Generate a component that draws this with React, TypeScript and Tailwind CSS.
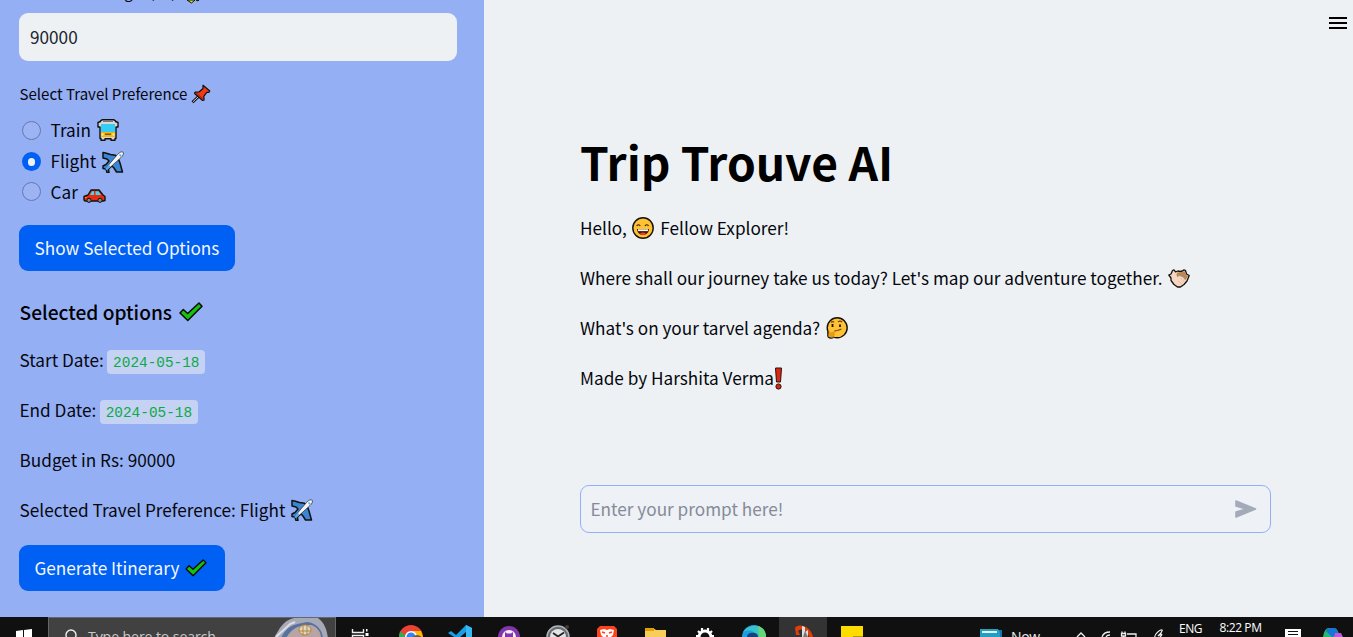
import React from "react";

type P = { children?: React.ReactNode; className?: string };

const Line = ({ children, className = "" }: P) => (
  <div className={"flex items-center whitespace-pre text-[17.2px] leading-[30px] " + className}>{children}</div>
);

const Check = ({ className = "h-5 w-6" }: P) => (
  <svg viewBox="0 0 24 20" className={"shrink-0 " + className}>
    <path d="M1 11 4.300 7.500l4.400 4L20 1l3 3.200L8.800 18.500z" fill="#13c30f" stroke="#0a0a0a" strokeWidth="1.500" strokeLinejoin="round" />
  </svg>
);

const Plane = ({ className = "" }: P) => (
  <svg viewBox="0 0 22 22" className={"h-[22px] w-[22px] shrink-0 " + className}>
    <path d="M1 1.500 3.500 2l5 1.500 5 .8 3 3.700 1.500 4 2.500 9h-6L12 17l-2-2-3.500 3 .5 3.500H5L4 18l-3-.5v-2.500l3-1.500L7 10 5 8 1 7z" fill="#3a86d4" stroke="#101010" strokeWidth="1.500" strokeLinejoin="round" />
    <path d="M3.600 17.500 15.500 3.500C17.500 1 20 .5 21 1s.5 3.500-2 5.500L5.500 18.800z" fill="#f3f3f3" stroke="#101010" strokeWidth=".6" strokeLinejoin="round" />
    <path d="m17.500 3.500 1.700 1.700" stroke="#37b8ee" strokeWidth="1.600" />
    <path d="m4 18.500 3.500-4" stroke="#4ba8ee" strokeWidth="2" />
  </svg>
);

const Bus = () => (
  <svg viewBox="0 0 22 22" className="h-[22px] w-[22px] shrink-0">
    <path d="M1 3.500 3.500 2.500V1.800L5 .8h12l1.500 1v.7L21 3.500V8h-2v11.500h-1v1.700h-4v-1.500H8v1.500H4v-1.700H3V8H1z" fill="#d8d8d8" stroke="#111" strokeWidth="1.400" strokeLinejoin="round" />
    <path d="M4 5h14v8H4z" fill="#33cdf5" />
    <path d="M4 13h14v5H4z" fill="#f6b80c" />
    <path d="M8 14.500h6v1.500H8z" fill="#775b20" />
    <path d="M4.500 14.500h2v2h-2zM15.500 14.500h2v2h-2z" fill="#fff1ac" />
    <path d="M6 2.500h10" stroke="#777" />
  </svg>
);

const Car = () => (
  <svg viewBox="0 0 23 14" className="h-3.5 w-[23px] shrink-0">
    <path d="M1 7.500 5 6l3-5h8l4 5 2 1.500v4l-2 .5H2l-1-1z" fill="#e72c12" stroke="#111" strokeWidth="1.400" strokeLinejoin="round" />
    <path d="M7 6 9 2.200h2V6zM12.500 6V2.200h3L18 6z" fill="#45d3ee" />
    <circle cx="6" cy="11.300" r="2.100" fill="#888" stroke="#111" /><circle cx="17" cy="11.300" r="2.100" fill="#888" stroke="#111" />
    <path d="M2 8.500h1.500" stroke="#ffb000" />
  </svg>
);

const Pin = () => (
  <svg viewBox="0 0 20 20" className="h-5 w-5 shrink-0">
    <path d="m8 12-6.500 6.300" stroke="#111" strokeWidth="2.800" />
    <path d="m8 12-6 5.700" stroke="#ddd" strokeWidth="1" />
    <path d="M12 1.200 18.800 7l-1 1.500-2-.2-3 4 .3 3.700-1.500.5-8-7L4 8.200l4-.2 4-3.500z" fill="#ef3b13" stroke="#111" strokeWidth="1.200" strokeLinejoin="round" />
    <path d="m5 8.700 7 6" stroke="#a91b0a" />
  </svg>
);

const Smile = () => (
  <svg viewBox="0 0 22 22" className="h-[22px] w-[22px] shrink-0">
    <circle cx="11" cy="11" r="10.200" fill="#ffc234" stroke="#15110a" strokeWidth="1.400" />
    <path d="M4.700 9c.5-1.700 3-1.700 3.500 0M13 9c.5-1.700 3-1.700 3.500 0" fill="none" stroke="#291b0c" strokeWidth="1.100" />
    <path d="M5 12h12c-.2 3.500-2.500 6-6 6s-5.800-2.500-6-6z" fill="#46170d" />
    <path d="M6 12.300h10v1.800H6z" fill="#fff" /><path d="M8 16.500c2-1.500 4-1.500 6 0-1.500 2-4.500 2-6 0z" fill="#ef4126" />
  </svg>
);

const Think = () => (
  <svg viewBox="0 0 22 22" className="h-[22px] w-[22px] shrink-0">
    <circle cx="11.200" cy="10.800" r="10" fill="#ffc234" stroke="#15110a" strokeWidth="1.400" />
    <path d="M2.500 14.500c1-1 1.500-.5 2 1l4-1.300c1.500-.2 1 1.300 0 1.500 1 2-.5 4.800-4 4.800-2 0-3-2.500-2-6z" fill="#e89b14" />
    <path d="M1.800 15v4c0 2 3 2.500 5.500 1.700" stroke="#111" strokeWidth="1.200" fill="none" />
    <path d="M6.500 7v3M14 7.500v2.500" stroke="#1c140b" strokeWidth="1.800" />
    <path d="M5 5.500c1-1 2-1 3.200-.3M12 4.800c1.300-.8 3-.7 4 .2M8.500 13.800l3-.3L15.500 12" fill="none" stroke="#77420c" strokeWidth="1.200" />
  </svg>
);

const Hands = () => (
  <svg viewBox="0 0 22 19" className="h-[19px] w-[22px] shrink-0">
    <path d="M.8 6 3 5l1.500-3.500L6 .8l1.500 2L10 2l2 .5 2.500-.5L16 .8l1.500.7L18.500 5 21.200 6.500 19 12l-3 3.500-3.500 2.500H9.500L6 15.500l-3-4L3 9z" fill="#f6d6c0" stroke="#17110d" strokeWidth="1.300" strokeLinejoin="round" />
    <path d="m9 3.500 3-.3 2.500-.5L16 2l1 .7 1 3 2 1.500-2.700 4-2.300-3-4-1.500-1.500 1.500L8.500 6z" fill="#b88858" />
    <path d="m10 12 4 3M13 9l3 4" stroke="#e6bda2" />
  </svg>
);

const Radio = ({ on = false }: { on?: boolean }) => on ? (
  <span className="flex h-[19px] w-[19px] items-center justify-center rounded-full bg-[#0060f3]"><i className="h-2 w-[7px] rounded-full bg-[#edf1f5]" /></span>
) : <span className="h-[19px] w-[19px] rounded-full border border-[#6678aa] bg-[#9db4f4]" />;

const Code = ({ children }: P) => (
  <span className="mt-[3px] ml-[3.5px] flex h-6 w-[98px] items-center justify-center rounded bg-[#c5d2f4] pt-[2px] font-[Liberation_Mono,monospace] text-[14.4px] text-[#0baa45]">{children}</span>
);

const Sidebar = () => (
  <aside className="flex h-full w-[484px] shrink-0 flex-col overflow-hidden bg-[#95aff5] pl-[19px]">
    <div className="relative h-[13px] w-[190px] shrink-0">
      <div className="absolute top-[-18px] left-px flex items-center text-[15.05px] leading-5 whitespace-pre">Enter Your Budget (Rs)</div>
      <svg viewBox="0 0 13 4" className="absolute top-0 left-[168px] h-1 w-[13px]"><path d="M0 0h8L4.500 3zM9 0h3l-1 1z" fill="#d9db32" stroke="#111" /></svg>
    </div>
    <div className="flex h-12 w-[438px] shrink-0 items-center rounded-[9px] bg-[#edf1f4] pb-px pl-[11px] text-[17.2px] text-[#20242d]">90000</div>
    <div className="mt-[18px] flex h-[30px] shrink-0 items-center gap-1 pl-[0.5px] text-[15.05px]"><span>Select Travel Preference</span><Pin /></div>
    <div className="mt-[6px] flex h-[93px] shrink-0 flex-col pl-[3px] text-[17.2px]">
      <div className="flex h-[31px] shrink-0 items-center"><Radio /><span className="mr-[6px] ml-[9.5px] pb-[2px]">Train</span><span className="pb-[2px]"><Bus /></span></div>
      <div className="flex h-[31px] shrink-0 items-center"><Radio on /><span className="mr-[6px] ml-[9.5px] pb-[2px]">Flight</span><Plane /></div>
      <div className="flex h-[29px] shrink-0 items-center"><Radio /><span className="mr-[5px] ml-[9.5px]">Car</span><span className="pt-[9px]"><Car /></span></div>
    </div>
    <button className="mt-[17px] flex h-[46px] w-[216px] shrink-0 items-center rounded-[9px] bg-[#0060f3] pb-px pl-[15.5px] text-[17.2px] whitespace-nowrap text-[#f3f7ff]">Show Selected Options</button>
    <div className="mt-[25px] flex h-8 shrink-0 items-center gap-[7px] pl-[0.5px] text-[19.150px] font-medium text-black"><span>Selected options</span><Check /></div>
    <Line className="mt-[17px] h-[30px] shrink-0 pl-[0.5px]">Start Date:<Code>2024-05-18</Code></Line>
    <Line className="mt-5 h-[30px] shrink-0 pl-[0.5px]">End Date:<Code>2024-05-18</Code></Line>
    <Line className="mt-5 h-[30px] shrink-0 pl-[0.5px]">Budget in Rs: 90000</Line>
    <Line className="mt-5 h-[30px] shrink-0 pl-[0.5px]">Selected Travel Preference: Flight<Plane className="ml-[6px]" /></Line>
    <button className="mt-5 flex h-[46px] w-[206px] shrink-0 items-center gap-[6px] rounded-[9px] bg-[#0060f3] pl-[15.5px] text-[17.2px] whitespace-nowrap text-[#f3f7ff]"><span className="pb-px">Generate Itinerary</span><Check className="h-[18px] w-[22px]" /></button>
  </aside>
);

const Main = () => (
  <main className="flex min-w-0 flex-1 flex-col bg-[#edf1f4]">
    <header className="flex h-[46px] shrink-0 justify-end pt-[17px] pr-[6px]">
      <svg viewBox="0 0 18 12" className="h-3 w-[18px]"><path d="M0 1h18M0 6h18M0 11h18" stroke="#000" strokeWidth="2" /></svg>
    </header>
    <div className="flex flex-col pl-24">
      <h1 className="mt-[85px] h-[60px] text-[46.1px] leading-[60px] font-bold whitespace-nowrap text-black">Trip Trouve AI</h1>
      <Line className="mt-[22px] h-[30px]">Hello,<span className="mr-[6px] ml-[5.5px]"><Smile /></span>Fellow Explorer!</Line>
      <Line className="mt-5 h-[30px]"><span>Where shall our journey take us today? Let's map our adventure together.</span><span className="ml-[5px]"><Hands /></span></Line>
      <Line className="mt-5 h-[30px]"><span>What's on your tarvel agenda?</span><span className="ml-[5.5px]"><Think /></span></Line>
      <Line className="mt-5 h-[30px]"><span>Made by Harshita Verma</span><svg viewBox="0 0 9 23" className="h-[23px] w-[9px]"><path d="M1.500 1h6L6.500 15h-4z" fill="#d82915" stroke="#301008" /><circle cx="4.500" cy="19.500" r="2.600" fill="#d82915" stroke="#301008" /></svg></Line>
      <div className="mt-[92px] flex h-12 w-[691px] items-center justify-between rounded-[9px] border border-[#95aff5] bg-[#eef1f5] pr-[13px] pl-[9.5px] text-[17.2px] text-[#858b98]">
        <span className="pb-px">Enter your prompt here!</span>
        <svg viewBox="0 0 22 18" className="h-[18px] w-[22px]"><path d="M1 1 20.500 9 1 17v-5L11 9 1 6z" fill="#a4aab9" stroke="#a4aab9" strokeWidth="1.600" strokeLinejoin="round" /></svg>
      </div>
    </div>
  </main>
);

const Taskbar = () => (
  <footer className="flex h-5 shrink-0 overflow-hidden bg-[#101010]">
    <div className="flex h-5 w-12 shrink-0 justify-end pr-4"><svg viewBox="0 0 16 16" className="mt-3 h-4 w-4"><path d="M0 2 7 1v7H0zM8 1l8-1v8H8z" fill="#fff" /></svg></div>
    <div className="flex h-5 w-[288px] shrink-0 overflow-hidden border border-b-0 border-[#666] bg-[#414141]">
      <svg viewBox="0 0 14 16" className="mt-[11px] ml-[15px] h-4 w-3.5 shrink-0"><circle cx="7" cy="6" r="5" fill="none" stroke="#eee" strokeWidth="1.400" /><path d="m3 10-3 4" stroke="#eee" strokeWidth="1.400" /></svg>
      <span className="mt-[9px] ml-[10px] w-[187px] shrink-0 font-['Open_Sans',sans-serif] text-[14.1px] leading-5 tracking-[-0.1px] whitespace-nowrap text-[#c9c9c9]">Type here to search</span>
      <svg viewBox="0 0 54 20" className="-ml-px h-5 w-[54px] shrink-0"><path d="M0 20C5 12 8 3 20 0h24c7 5 9 13 10 20z" fill="#a8a9b7" /><path d="M7 20C13 8 18 7 33 4c10 1 15 8 16 16z" fill="#56729e" /><path d="M12 20c7-11 13-13 25-13 7 2 10 8 10 13z" fill="#b8a3a5" /><ellipse cx="31" cy="12" rx="6" ry="5" fill="#ddd6ca" stroke="#b68737" /><path d="M29 7v10m4-10v10m-8-4h12" stroke="#b68737" /><path d="m2 19 14-13 5-2" stroke="#dddee6" strokeWidth="2" fill="none" /></svg>
    </div>
    <svg viewBox="0 0 644 20" className="h-5 w-[644px] shrink-0">
      <path d="M16.500 12v3.500h11V12M16.500 20v-1.500h11V20" fill="none" stroke="#eee" strokeWidth="1.400" /><path d="M30 12h1.500v2.500H30zM29.500 16h3v3h-3z" fill="#fff" />
      <circle cx="75" cy="20" r="12" fill="#ea4335" /><path d="m64 14 7 6h-8z" fill="#34a853" /><path d="M75 14h10l2 6h-7z" fill="#fbbc05" /><circle cx="75" cy="20" r="6" fill="#fff" /><circle cx="75" cy="20" r="4.500" fill="#3484ef" /><circle cx="81" cy="24" r="6" fill="#725540" />
      <path d="m112 16 3-2 5 4 10-10 6 3v9h-6v-5l-6 5h-6z" fill="#189ee5" /><path d="m130 8 6 3v9h-6z" fill="#35b8f4" />
      <circle cx="173" cy="20" r="11" fill="#8335ab" /><circle cx="173" cy="20" r="7" fill="#f4effa" /><path d="m169 15 2 1.500h4l2-1.500v5h-8z" fill="#8335ab" />
      <circle cx="222" cy="20" r="11" fill="#646a70" stroke="#aeb3b9" strokeWidth="1.500" /><circle cx="222" cy="20" r="8" fill="#e2e4e6" /><path d="m217 16 5 3.500 6-4" fill="none" stroke="#222" strokeWidth="1.800" /><circle cx="231" cy="10" r="2" fill="#403b36" />
      <path d="m261 12 3-3h14l3 3v8h-20z" fill="#fb431e" /><path d="m264 13 4-1 3 1 3-1 4 1-1 5-2 2h-8l-2-2z" fill="#fff" /><path d="m266 15 3 1m4 0 3-1m-6 4h2" stroke="#fb431e" strokeWidth="1.500" />
      <path d="M309 11h8l3 2h10v7h-21z" fill="#f8cd59" /><path d="M309 11h9v3h-9z" fill="#dfa000" />
      <circle cx="369" cy="20" r="6" fill="none" stroke="#fff" strokeWidth="3" /><path d="M366 11v4m6-4v4m-10-1 3 3m11-3-3 3m-13 2h4m10 0h4" stroke="#fff" strokeWidth="2.200" />
      <circle cx="418" cy="20" r="12" fill="#209de2" /><path d="M407 15c7-10 22-8 23 5h-10c0-6-6-8-13-5z" fill="#36c3cc" /><path d="M422 9c6 2 8 6 8 11h-7z" fill="#64d678" /><path d="M411 20c0-6 12-5 11 0z" fill="#12457a" />
      <path d="M443 0h48v20h-48z" fill="#333" /><path d="M459 11c2-5 16-3 18 9h-4c-1-6-8-10-11-6l2 4h-4z" fill="#dc3f0d" /><path d="m466 9 3 1v5l3-2v7h-6z" fill="#ddd" /><path d="m469 14 3 6h-5z" fill="#777" />
      <path d="M505 9h22v11h-22z" fill="#ffdc00" /><path d="M517 19h10v1h-10z" fill="#b19a12" />
    </svg>
    <svg viewBox="0 0 28 20" className="h-5 w-7 shrink-0"><path d="M4 13h18v7H4z" fill="#1574b5" /><path d="M0 12h18l2 3v5H0z" fill="#239fc1" /><path d="M2 15h15" stroke="#fff" strokeWidth="1.800" /></svg>
    <span className="mt-[10px] ml-[3px] w-[64px] shrink-0 font-['Open_Sans',sans-serif] text-[14px] leading-5 tracking-[-0.3px] text-[#eee]">Now</span>
    <svg viewBox="0 0 104 20" className="h-5 w-[104px] shrink-0"><path d="m2 20 4-4 4 4M27 20c1-3 4-5 8-5m-4 5c1-2 2-2 4-2M52 17h9v3M46.500 16.500h4v2.500h-4zm.5-2v2m3-2v2m-1.500 3v1M80 20c-1-2 5-8 7-7 1 1-2 4-4 6 4-3 5-2 2 1" fill="none" stroke="#eee" strokeWidth="1.300" /></svg>
    <span className="mt-[2px] w-10 shrink-0 font-['Open_Sans',sans-serif] text-[12px] leading-5 tracking-[-0.5px] text-white">ENG</span>
    <span className="mt-px ml-[0.5px] w-[65.5px] shrink-0 font-['Open_Sans',sans-serif] text-[12px] leading-5 tracking-[-0.4px] whitespace-nowrap text-white">8:22 PM</span>
    <svg viewBox="0 0 68 20" className="h-5 w-[68px] shrink-0"><path d="M0 12h16v8H0z" fill="#fff" /><path d="M3 14.500h10M3 17.500h10" stroke="#111" /><path d="M38 20c1-6 3-9 6-9h5c3 0 5 5 6 9z" fill="#26b96d" /><path d="M41 14c1-3 3-3 8-3 3 0 4 5 5 7l-7 2z" fill="#1774d8" /><path d="M50 16h6l2 4h-9z" fill="#c056dc" /></svg>
  </footer>
);

export default function App() {
  return (
    <div className="flex h-[637px] w-[1353px] flex-col overflow-hidden font-['Noto_Sans_CJK_JP',sans-serif] text-[#05070d]">
      <div className="flex h-[617px] shrink-0"><Sidebar /><Main /></div>
      <Taskbar />
    </div>
  );
}
